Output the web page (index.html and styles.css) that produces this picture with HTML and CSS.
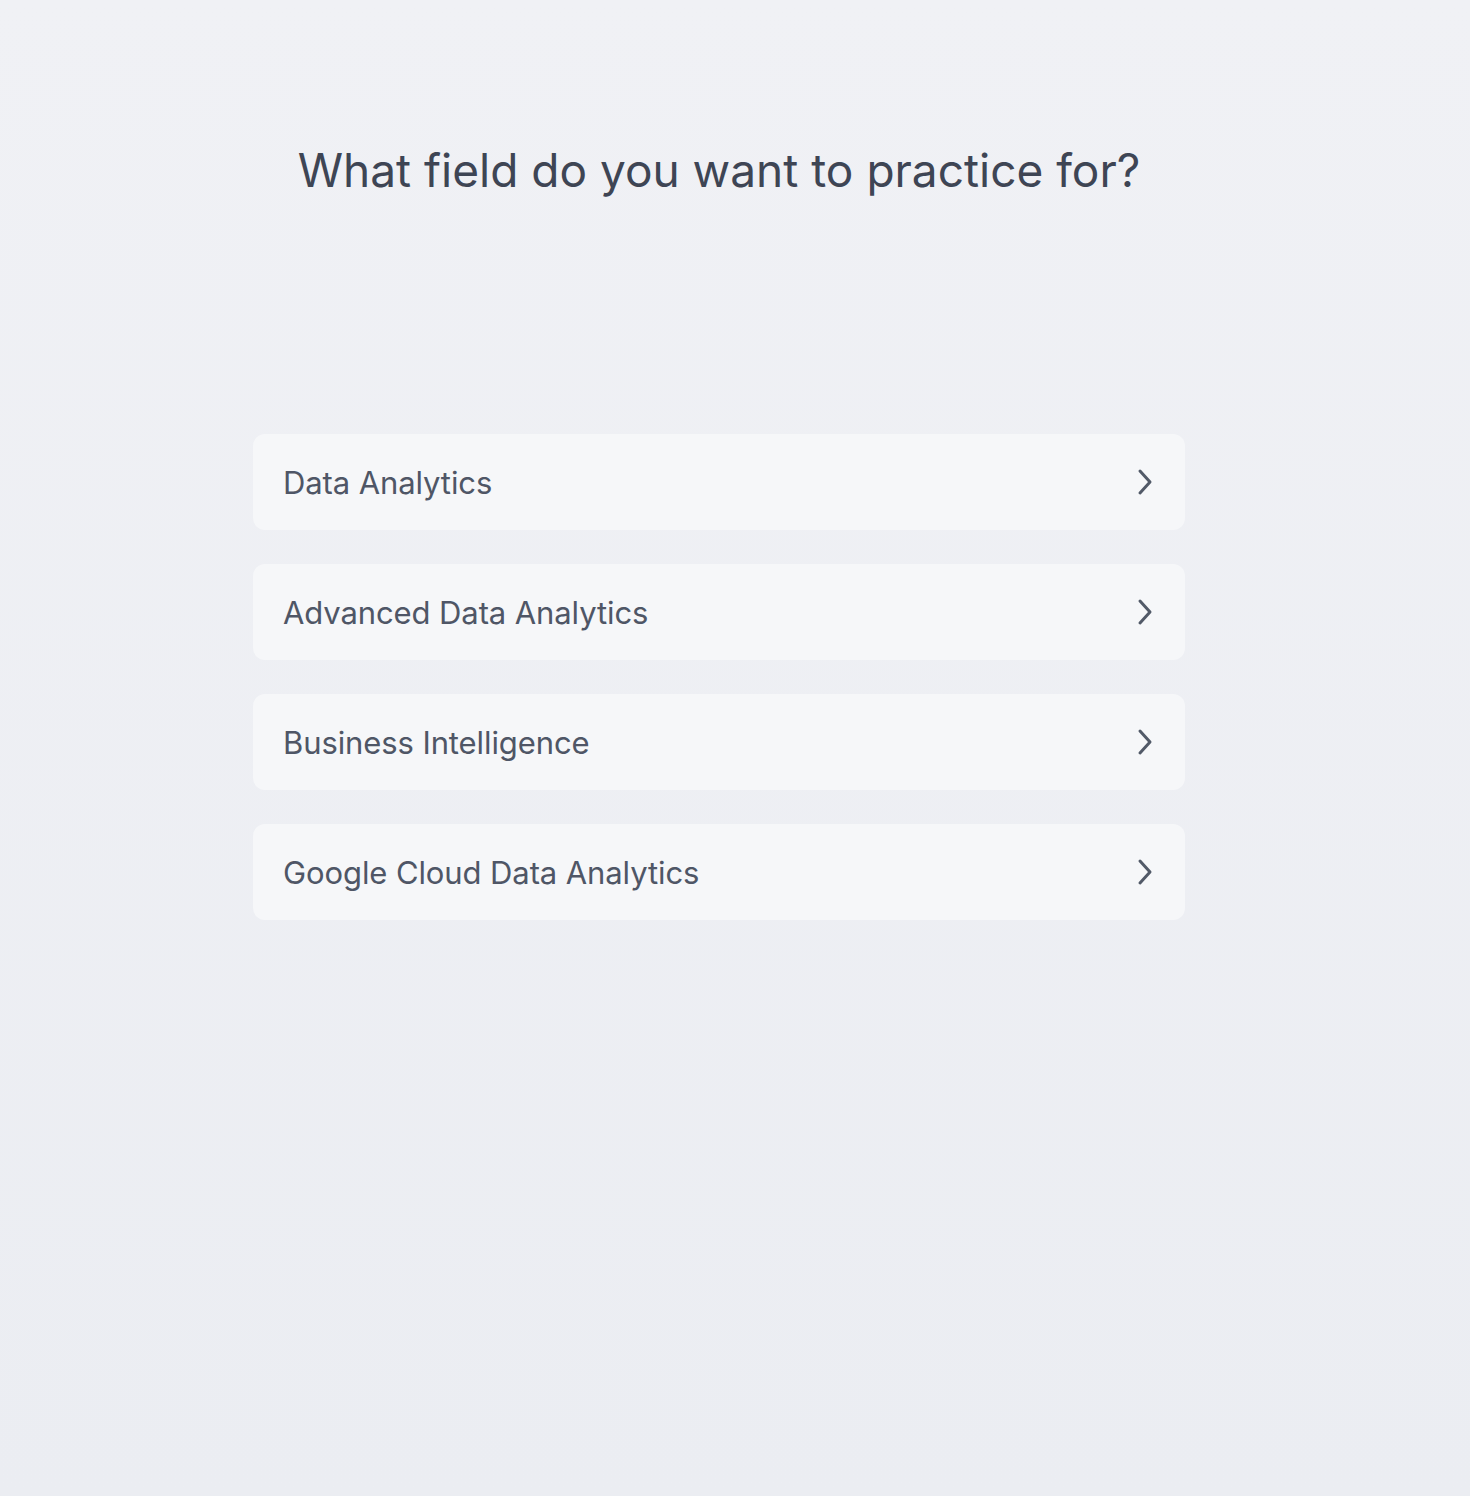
FILE: index.html
```html
<!DOCTYPE html>
<html lang="en">
<head>
<meta charset="utf-8">
<title>Practice field</title>
<link rel="stylesheet" href="styles.css">
</head>
<body>
<main class="page">
  <h1 class="title">What field do you want to practice for?</h1>
  <ul class="options">
    <li class="option"><span class="option-label">Data Analytics</span><svg class="chev" viewBox="0 0 20 28" width="20" height="28"><path d="M5 3 L15 14 L5 25" fill="none" stroke="currentColor" stroke-width="3" stroke-linecap="round" stroke-linejoin="round"/></svg></li>
    <li class="option"><span class="option-label">Advanced Data Analytics</span><svg class="chev" viewBox="0 0 20 28" width="20" height="28"><path d="M5 3 L15 14 L5 25" fill="none" stroke="currentColor" stroke-width="3" stroke-linecap="round" stroke-linejoin="round"/></svg></li>
    <li class="option"><span class="option-label">Business Intelligence</span><svg class="chev" viewBox="0 0 20 28" width="20" height="28"><path d="M5 3 L15 14 L5 25" fill="none" stroke="currentColor" stroke-width="3" stroke-linecap="round" stroke-linejoin="round"/></svg></li>
    <li class="option"><span class="option-label">Google Cloud Data Analytics</span><svg class="chev" viewBox="0 0 20 28" width="20" height="28"><path d="M5 3 L15 14 L5 25" fill="none" stroke="currentColor" stroke-width="3" stroke-linecap="round" stroke-linejoin="round"/></svg></li>
  </ul>
</main>
</body>
</html>
```
FILE: styles.css
```css
html, body {
  margin: 0;
  padding: 0;
}
body {
  min-height: 1496px;
  background: linear-gradient(180deg, #f0f1f5 0%, #ebedf2 100%);
  font-family: "Inter", "Open Sans", sans-serif;
  padding-right: 32px;
  box-sizing: border-box;
}
.page {
  width: 932px;
  margin: 0 auto;
  padding-top: 138px;
}
.title {
  margin: 0;
  text-align: center;
  font-size: 46px;
  line-height: 64px;
  font-weight: 400;
  color: #3e4554;
  letter-spacing: 0;
}
.options {
  list-style: none;
  margin: 232px 0 0;
  padding: 0;
  display: flex;
  flex-direction: column;
  gap: 34px;
}
.option {
  height: 96px;
  box-sizing: border-box;
  background: #f6f7f9;
  border-radius: 12px;
  display: flex;
  align-items: center;
  justify-content: space-between;
  padding: 0 30px 0 30px;
  color: #4f5666;
}
.option-label {
  font-size: 31px;
  letter-spacing: -0.1px;
}
.chev {
  color: #525a68;
}
```
